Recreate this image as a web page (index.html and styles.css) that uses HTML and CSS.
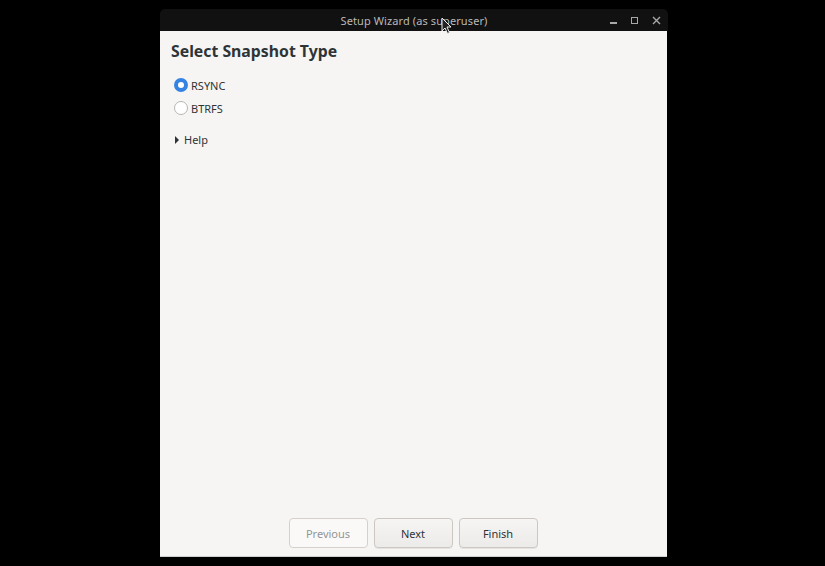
FILE: index.html
```html
<!DOCTYPE html>
<html>
<head>
<meta charset="utf-8">
<link rel="stylesheet" href="styles.css">
</head>
<body>
<div class="desktop">
  <div class="window">
    <div class="titlebar">
      <span class="title">Setup Wizard (as superuser)</span>
      <div class="controls">
        <span class="ctl min"></span>
        <span class="ctl max"></span>
        <svg class="ctl close" width="9" height="9" viewBox="0 0 9 9"><path d="M1 1L8 8M8 1L1 8" stroke="#a8a8a8" stroke-width="1.4"/></svg>
      </div>
      <svg class="cursor" width="12" height="18" viewBox="0 0 12 18"><path d="M1 1L1 14L4 11L6.5 16.5L8.5 15.5L6 10L10 10Z" fill="#222" stroke="#eee" stroke-width="1"/></svg>
    </div>
    <div class="content">
      <h1 class="heading">Select Snapshot Type</h1>
      <div class="options">
        <label class="radio"><span class="dot checked"></span><span>RSYNC</span></label>
        <label class="radio"><span class="dot"></span><span>BTRFS</span></label>
      </div>
      <div class="expander"><span class="arrow"></span><span>Help</span></div>
      <div class="spacer"></div>
      <div class="buttons">
        <button class="btn disabled">Previous</button>
        <button class="btn">Next</button>
        <button class="btn">Finish</button>
      </div>
    </div>
  </div>
</div>
</body>
</html>
```
FILE: styles.css
```css
html, body {
  margin: 0;
  padding: 0;
  background: #000;
  width: 825px;
  height: 566px;
  overflow: hidden;
  font-family: "Noto Sans", "Open Sans", sans-serif;
}
.desktop {
  padding: 9px 0 0 160px;
}
.window {
  width: 508px;
  display: flex;
  flex-direction: column;
}
.titlebar {
  height: 22px;
  background: #111;
  border-radius: 5px 5px 0 0;
  display: flex;
  align-items: center;
  justify-content: center;
  position: relative;
}
.title {
  color: #b9b9b9;
  font-size: 11px;
  letter-spacing: 0.1px;
}
.controls {
  position: absolute;
  right: 7px;
  top: 0;
  height: 22px;
  display: flex;
  align-items: center;
  gap: 14px;
}
.ctl { display: block; }
.min {
  width: 7px;
  height: 1.5px;
  background: #a8a8a8;
  margin-top: 6px;
}
.max {
  width: 5px;
  height: 5px;
  border: 1.5px solid #a8a8a8;
}
.cursor {
  position: absolute;
  left: 281px;
  top: 8px;
}
.content {
  height: 526px;
  background: #f6f5f4;
  border-bottom: 1px solid #cfcfcf;
  box-sizing: border-box;
  width: 507px;
  padding: 0 11px;
  display: flex;
  flex-direction: column;
}
.heading {
  margin: 9px 0 0 0;
  font-size: 15.8px;
  font-weight: bold;
  color: #2e3436;
  line-height: 22px;
}
.options {
  margin-top: 15px;
  margin-left: 3px;
  display: flex;
  flex-direction: column;
  gap: 7px;
}
.radio {
  display: flex;
  align-items: center;
  gap: 3px;
  font-size: 11px;
  color: #2e3436;
  height: 16px;
}
.dot {
  width: 12px;
  height: 12px;
  border-radius: 50%;
  border: 1px solid #b6b6b3;
  background: #fff;
  box-sizing: content-box;
}
.dot.checked {
  width: 6px;
  height: 6px;
  border: 4px solid #3584e4;
  background: #fff;
}
.expander {
  margin-top: 16px;
  margin-left: 4px;
  display: flex;
  align-items: center;
  gap: 5px;
  font-size: 11px;
  color: #2e3436;
}
.arrow {
  width: 0;
  height: 0;
  border-top: 4px solid transparent;
  border-bottom: 4px solid transparent;
  border-left: 4px solid #2e3436;
}
.spacer { flex: 1; }
.buttons {
  display: flex;
  justify-content: center;
  gap: 6px;
  margin-bottom: 8px;
  padding-right: 1px;
}
.btn {
  width: 79px;
  height: 30px;
  font-family: inherit;
  font-size: 11px;
  color: #2e3436;
  background: linear-gradient(#f6f5f4, #edebe9);
  border: 1px solid #cdc7c2;
  border-radius: 4px;
  box-shadow: 0 1px 0 rgba(0,0,0,0.07);
}
.btn.disabled {
  color: #929595;
  background: #faf9f8;
  border-color: #d5d0cc;
  box-shadow: none;
}
```
